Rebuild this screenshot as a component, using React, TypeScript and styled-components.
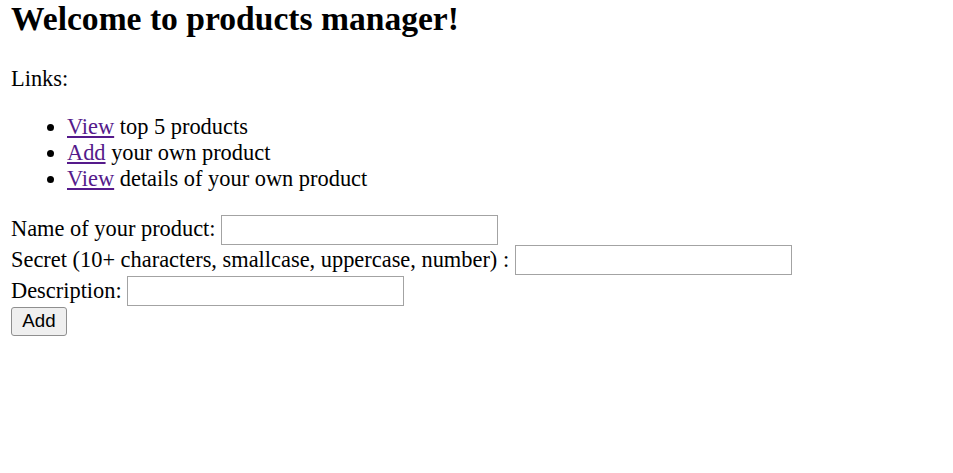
import styled, { createGlobalStyle } from "styled-components"

const GlobalStyle = createGlobalStyle`
  html, body {
    margin: 0;
    padding: 0;
    background: #ffffff;
  }
  body {
    font-family: "Liberation Serif", "Times New Roman", serif;
    font-size: 22.4px;
    color: #000000;
  }
`

const Page = styled.div`
  padding: 0 11px;
`

const Title = styled.h2`
  margin: 0;
  font-size: 33.6px;
  font-weight: bold;
  line-height: 37.4px;
`

const Intro = styled.p`
  margin: 29px 0 0;
  line-height: 26px;
`

const LinkList = styled.ul`
  margin: 22px 0 0;
  padding-left: 56px;
  line-height: 26px;
  list-style: disc;
`

const NavLink = styled.a`
  color: #551a8b;
  text-decoration: underline;
  cursor: pointer;
`

const Form = styled.form`
  margin-top: 22px;
  display: flex;
  flex-direction: column;
  align-items: flex-start;
`

const Row = styled.div`
  display: flex;
  align-items: center;
  gap: 5.5px;
  height: 30.67px;
`

const Label = styled.label`
  line-height: 26px;
  margin-top: -1px;
  white-space: nowrap;
`

const TextInput = styled.input`
  box-sizing: border-box;
  width: 277px;
  height: 30px;
  margin: 0;
  padding: 1px 3px;
  border: 1.4px solid #a3a3a3;
  border-radius: 0;
  background: #ffffff;
  font-family: "Liberation Sans", Arial, sans-serif;
  font-size: 18.7px;
  outline: none;
`

const SubmitButton = styled.button`
  box-sizing: border-box;
  width: 56px;
  height: 29px;
  margin-top: 0.5px;
  padding: 0;
  border: 1.4px solid #8f8f8f;
  border-radius: 3px;
  background: #efefef;
  color: #000000;
  font-family: "Liberation Sans", Arial, sans-serif;
  font-size: 18.7px;
`

export default function App() {
  return (
    <>
      <GlobalStyle />
      <Page>
        <Title>Welcome to products manager!</Title>
        <Intro>Links:</Intro>
        <LinkList>
          <li>
            <NavLink>View</NavLink> top 5 products
          </li>
          <li>
            <NavLink>Add</NavLink> your own product
          </li>
          <li>
            <NavLink>View</NavLink> details of your own product
          </li>
        </LinkList>
        <Form onSubmit={(e) => e.preventDefault()}>
          <Row>
            <Label>Name of your product:</Label>
            <TextInput type="text" />
          </Row>
          <Row>
            <Label>Secret (10+ characters, smallcase, uppercase, number) :</Label>
            <TextInput type="text" />
          </Row>
          <Row>
            <Label>Description:</Label>
            <TextInput type="text" />
          </Row>
          <SubmitButton type="submit">Add</SubmitButton>
        </Form>
      </Page>
    </>
  )
}
